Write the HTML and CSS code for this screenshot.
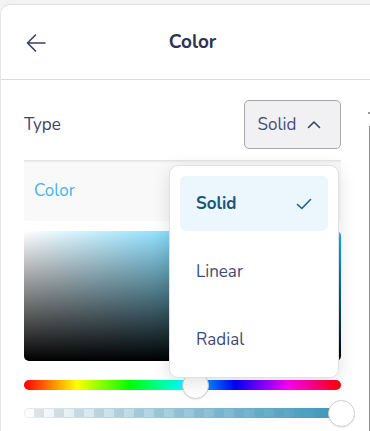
FILE: index.html
```html
<!DOCTYPE html>
<html>
<head>
<meta charset="utf-8">
<link rel="stylesheet" href="styles.css">
</head>
<body>
<div class="panel">
  <header class="head">
    <svg class="back" width="20" height="18" viewBox="0 0 20 18"><path d="M19 9H1.5M9.5 1L1.5 9l8 8" fill="none" stroke="#3a3f5c" stroke-width="1.6" stroke-linecap="round" stroke-linejoin="round"/></svg>
    <h1 class="title">Color</h1>
  </header>
  <div class="body">
    <div class="type-row">
      <span class="label">Type</span>
      <button class="select">Solid
        <svg width="14" height="9" viewBox="0 0 14 9"><path d="M1.5 7.5L7 2l5.5 5.5" fill="none" stroke="#3a4266" stroke-width="1.6" stroke-linecap="round" stroke-linejoin="round"/></svg>
      </button>
    </div>
    <div class="section">
      <div class="section-head">Color</div>
      <div class="picker"></div>
      <div class="slider hue"><span class="thumb hue-thumb"></span></div>
      <div class="slider alpha"><div class="alpha-fill"></div><span class="thumb alpha-thumb"></span></div>
    </div>
    <ul class="menu">
      <li class="item selected">Solid
        <svg width="16" height="12" viewBox="0 0 16 12"><path d="M1.5 6.5L5.8 10.5 14.5 1.5" fill="none" stroke="#1e6488" stroke-width="1.6" stroke-linecap="round" stroke-linejoin="round"/></svg>
      </li>
      <li class="item">Linear</li>
      <li class="item">Radial</li>
    </ul>
  </div>
  <span class="edge-dot"></span>
  <span class="edge-line"></span>
</div>
</body>
</html>
```

FILE: styles.css
```css
html, body {
  margin: 0;
  padding: 0;
  background: #f3f3f4;
  font-family: "Nunito", "Lato", "Open Sans", sans-serif;
  overflow: hidden;
}
.panel {
  position: relative;
  margin-top: 4px;
  height: 427px;
  background: #fff;
  border-top: 1px solid #dedee2;
  border-left: 1px solid #e6e6e8;
  border-top-left-radius: 10px;
}
.head {
  position: relative;
  height: 74px;
  border-bottom: 1px solid #dcdcdf;
  display: flex;
  align-items: center;
  justify-content: center;
}
.back {
  position: absolute;
  left: 25px;
  top: 29px;
}
.title {
  margin: 0;
  font-size: 19px;
  font-weight: 700;
  color: #2f3450;
  margin-left: 14px;
}
.body {
  position: relative;
  padding: 20px 29px 0 23px;
}
.type-row {
  display: flex;
  align-items: center;
  justify-content: space-between;
  height: 49px;
}
.label {
  font-size: 17px;
  color: #3d4466;
}
.select {
  width: 97px;
  height: 49px;
  display: flex;
  align-items: center;
  justify-content: center;
  gap: 11px;
  background: #f1f1f4;
  border: 1px solid #a7a7b0;
  border-radius: 5px;
  font-family: inherit;
  font-size: 17px;
  color: #454e78;
  padding: 0 6px 0 0;
}
.section {
  margin-top: 11px;
}
.section-head {
  height: 61px;
  background: #f9f9f9;
  box-shadow: inset 0 3px 3px -2px rgba(0,0,0,0.12);
  display: flex;
  align-items: center;
  padding-left: 10px;
  font-size: 17px;
  color: #4ab2e8;
}
.picker {
  margin-top: 10px;
  height: 130px;
  border-radius: 5px;
  background:
    linear-gradient(to top, #000, rgba(0,0,0,0)),
    linear-gradient(to right, #fff, rgba(255,255,255,0)),
    #00bbff;
}
.slider {
  position: relative;
  height: 10px;
  border-radius: 5px;
}
.hue {
  margin-top: 19px;
  background: linear-gradient(to right, #f00, #ff0, #0f0, #0ff, #00f, #f0f, #f00);
}
.alpha {
  margin-top: 18px;
  background: repeating-linear-gradient(to right, #ffffff 0 10px, #e4e6e8 10px 20px);
  box-shadow: inset 0 0 0 1px #ececec;
}
.alpha-fill {
  height: 100%;
  border-radius: 5px;
  background: linear-gradient(to right, rgba(58,150,185,0), rgb(58,150,185));
}
.thumb {
  position: absolute;
  width: 25px;
  height: 25px;
  border-radius: 50%;
  background: #fff;
  border: 1px solid #cfcfd3;
  box-shadow: 0 1px 2px rgba(0,0,0,0.08);
  top: -8px;
}
.hue-thumb {
  left: 158px;
}
.alpha-thumb {
  right: -14px;
}
.menu {
  position: absolute;
  left: 168px;
  top: 85px;
  width: 148px;
  margin: 0;
  padding: 10px;
  list-style: none;
  background: #fff;
  border: 1px solid #e1e1e4;
  border-radius: 9px;
  box-shadow: 0 4px 18px rgba(0,0,0,0.12);
  display: flex;
  flex-direction: column;
  gap: 13px;
}
.item {
  height: 55px;
  display: flex;
  align-items: center;
  justify-content: space-between;
  padding: 0 16px;
  border-radius: 6px;
  font-size: 17px;
  color: #3f4a74;
}
.item.selected {
  background: #ebf6fd;
  color: #1a5878;
  font-weight: 700;
}
.edge-dot {
  position: absolute;
  right: 0;
  top: 107px;
  width: 2px;
  height: 2px;
  background: #9a9a9a;
}
.edge-line {
  position: absolute;
  right: 0;
  top: 121px;
  bottom: 0;
  width: 1px;
  background: #8e8e8e;
}
```
